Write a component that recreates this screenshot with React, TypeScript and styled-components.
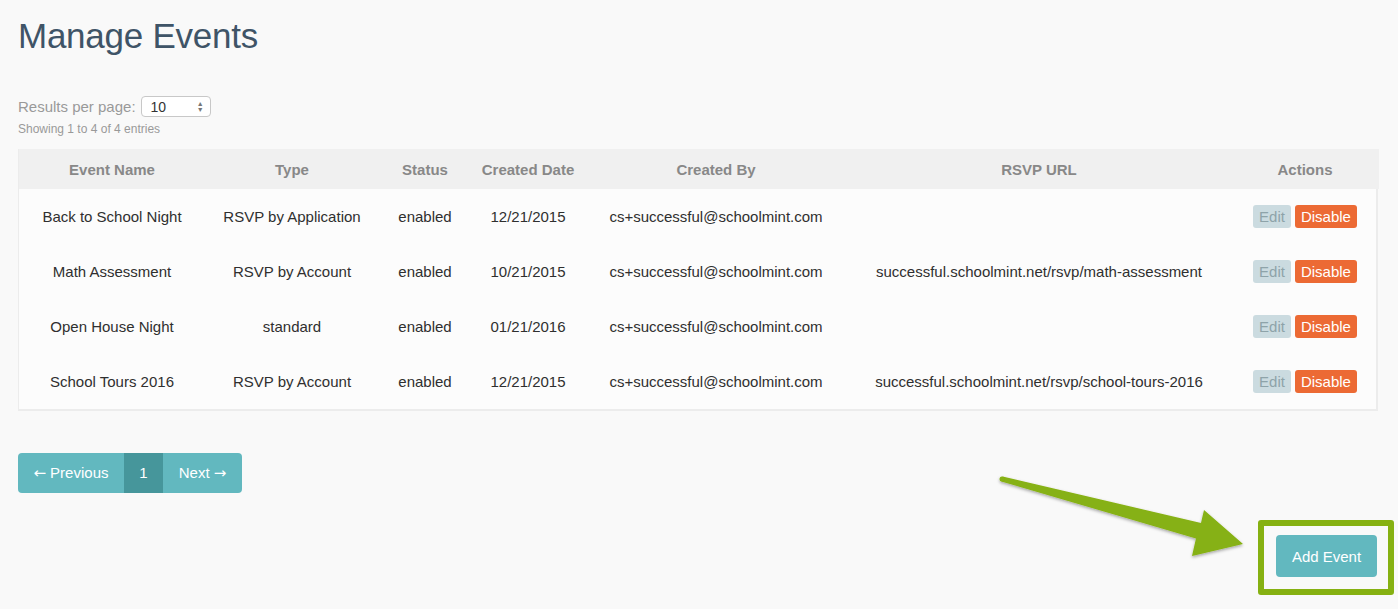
import React from 'react';
import styled, { createGlobalStyle } from 'styled-components';

type EventRow = {
  name: string;
  type: string;
  status: string;
  created: string;
  createdBy: string;
  url: string;
};

const events: EventRow[] = [
  {
    name: 'Back to School Night',
    type: 'RSVP by Application',
    status: 'enabled',
    created: '12/21/2015',
    createdBy: 'cs+successful@schoolmint.com',
    url: '',
  },
  {
    name: 'Math Assessment',
    type: 'RSVP by Account',
    status: 'enabled',
    created: '10/21/2015',
    createdBy: 'cs+successful@schoolmint.com',
    url: 'successful.schoolmint.net/rsvp/math-assessment',
  },
  {
    name: 'Open House Night',
    type: 'standard',
    status: 'enabled',
    created: '01/21/2016',
    createdBy: 'cs+successful@schoolmint.com',
    url: '',
  },
  {
    name: 'School Tours 2016',
    type: 'RSVP by Account',
    status: 'enabled',
    created: '12/21/2015',
    createdBy: 'cs+successful@schoolmint.com',
    url: 'successful.schoolmint.net/rsvp/school-tours-2016',
  },
];

const columns = [
  { label: 'Event Name', width: 186 },
  { label: 'Type', width: 174 },
  { label: 'Status', width: 92 },
  { label: 'Created Date', width: 114 },
  { label: 'Created By', width: 262 },
  { label: 'RSVP URL', width: 384 },
  { label: 'Actions', width: 148 },
];

const GlobalStyle = createGlobalStyle`
  html, body {
    margin: 0;
    padding: 0;
    background: #f9f9f9;
  }
  body {
    font-family: "Liberation Sans", Arial, sans-serif;
  }
`;

const Page = styled.div`
  position: relative;
  box-sizing: border-box;
  width: 1398px;
  min-height: 609px;
  padding: 16px 20px 0 18px;
`;

const Title = styled.h1`
  margin: 0;
  font-size: 35px;
  line-height: 40px;
  font-weight: normal;
  color: #3f5467;
  letter-spacing: -0.25px;
`;

const PerPageRow = styled.div`
  display: flex;
  align-items: center;
  gap: 5px;
  margin-top: 40px;
  height: 21px;
  font-size: 15px;
  color: #999;
`;

const SelectBox = styled.div`
  box-sizing: border-box;
  display: flex;
  align-items: center;
  justify-content: space-between;
  width: 70px;
  height: 21px;
  padding: 0 6px 0 9px;
  background: #fff;
  border: 1px solid #c8c8c8;
  border-radius: 4px;
  color: #333;
  font-size: 14px;
`;

const Spinner = styled.span`
  display: flex;
  flex-direction: column;
  font-size: 7px;
  line-height: 6px;
  color: #777;
`;

const Showing = styled.div`
  margin-top: 4px;
  font-size: 12px;
  line-height: 16px;
  color: #999;
`;

const TableFrame = styled.div`
  margin-top: 12px;
  border: 2px solid #ececec;
  border-top: 0;
  border-left-width: 1px;
  background: #fcfcfc;
`;

const Table = styled.table`
  width: 100%;
  border-collapse: collapse;
  table-layout: fixed;
`;

const HeadCell = styled.th`
  height: 40px;
  padding: 0;
  background: #f0f0f0;
  color: #888;
  font-size: 15px;
  font-weight: bold;
  text-align: center;
`;

const Cell = styled.td`
  height: 55px;
  padding: 0;
  color: #2f2f2f;
  font-size: 15px;
  text-align: center;
  white-space: nowrap;
`;

const Actions = styled.div`
  display: flex;
  justify-content: center;
  gap: 4px;
`;

const SmallButton = styled.button<{ $variant: 'edit' | 'disable' }>`
  height: 23px;
  padding: 0 6px;
  border: 0;
  border-radius: 3px;
  font-family: inherit;
  font-size: 15px;
  background: ${(p) => (p.$variant === 'edit' ? '#cbdbe0' : '#ec6a34')};
  color: ${(p) => (p.$variant === 'edit' ? '#8ea3a9' : '#fff')};
`;

const Pager = styled.div`
  display: inline-flex;
  margin-top: 42px;
  height: 40px;
  border-radius: 4px;
  overflow: hidden;
`;

const PageButton = styled.button<{ $active?: boolean; $width: number }>`
  display: flex;
  align-items: center;
  justify-content: center;
  gap: 4px;
  width: ${(p) => p.$width}px;
  height: 40px;
  padding: 0;
  border: 0;
  font-family: inherit;
  font-size: 15px;
  line-height: 40px;
  color: #fff;
  background: ${(p) => (p.$active ? '#46969b' : '#62b8bf')};
`;

const PageArrow = styled.span`
  font-family: "DejaVu Sans", sans-serif;
  font-size: 15px;
  line-height: 40px;
`;

const Footer = styled.div`
  display: flex;
  justify-content: flex-end;
  margin-top: 27px;
  margin-right: -16px;
`;

const Highlight = styled.div`
  box-sizing: border-box;
  width: 136px;
  height: 75px;
  padding: 9px 11px 0 12px;
  border: 6px solid #86b112;
  border-radius: 3px;
`;

const AddButton = styled.button`
  width: 101px;
  height: 42px;
  border: 0;
  border-radius: 4px;
  background: #62b8bf;
  color: #fff;
  font-family: inherit;
  font-size: 15px;
`;

const ArrowLayer = styled.svg`
  position: absolute;
  top: 0;
  left: 0;
  pointer-events: none;
`;

export default function App() {
  return (
    <>
      <GlobalStyle />
      <Page>
        <Title>Manage Events</Title>
        <PerPageRow>
          Results per page:
          <SelectBox>
            10
            <Spinner>
              <span>▲</span>
              <span>▼</span>
            </Spinner>
          </SelectBox>
        </PerPageRow>
        <Showing>Showing 1 to 4 of 4 entries</Showing>
        <TableFrame>
          <Table>
            <colgroup>
              {columns.map((c) => (
                <col key={c.label} style={{ width: c.width }} />
              ))}
            </colgroup>
            <thead>
              <tr>
                {columns.map((c) => (
                  <HeadCell key={c.label}>{c.label}</HeadCell>
                ))}
              </tr>
            </thead>
            <tbody>
              {events.map((e) => (
                <tr key={e.name}>
                  <Cell>{e.name}</Cell>
                  <Cell>{e.type}</Cell>
                  <Cell>{e.status}</Cell>
                  <Cell>{e.created}</Cell>
                  <Cell>{e.createdBy}</Cell>
                  <Cell>{e.url}</Cell>
                  <Cell>
                    <Actions>
                      <SmallButton $variant="edit">Edit</SmallButton>
                      <SmallButton $variant="disable">Disable</SmallButton>
                    </Actions>
                  </Cell>
                </tr>
              ))}
            </tbody>
          </Table>
        </TableFrame>
        <Pager>
          <PageButton $width={106}>
            <PageArrow>←</PageArrow>
            <span>Previous</span>
          </PageButton>
          <PageButton $width={39} $active>
            1
          </PageButton>
          <PageButton $width={79}>
            <span>Next</span>
            <PageArrow>→</PageArrow>
          </PageButton>
        </Pager>
        <Footer>
          <Highlight>
            <AddButton>Add Event</AddButton>
          </Highlight>
        </Footer>
        <ArrowLayer width="1398" height="609" viewBox="0 0 1398 609">
          <defs>
            <filter id="arrowShadow" x="-10%" y="-30%" width="120%" height="160%">
              <feDropShadow dx="0" dy="1.5" stdDeviation="1.5" floodColor="#000" floodOpacity="0.35" />
            </filter>
          </defs>
          <g filter="url(#arrowShadow)" fill="#86b112">
            <polygon points="1002.6,476.6 1201,523 1204,510 1243,544 1192,556 1196,538.5 1001.3,481.4" />
            <circle cx="1002" cy="479" r="2.5" />
          </g>
        </ArrowLayer>
      </Page>
    </>
  );
}
